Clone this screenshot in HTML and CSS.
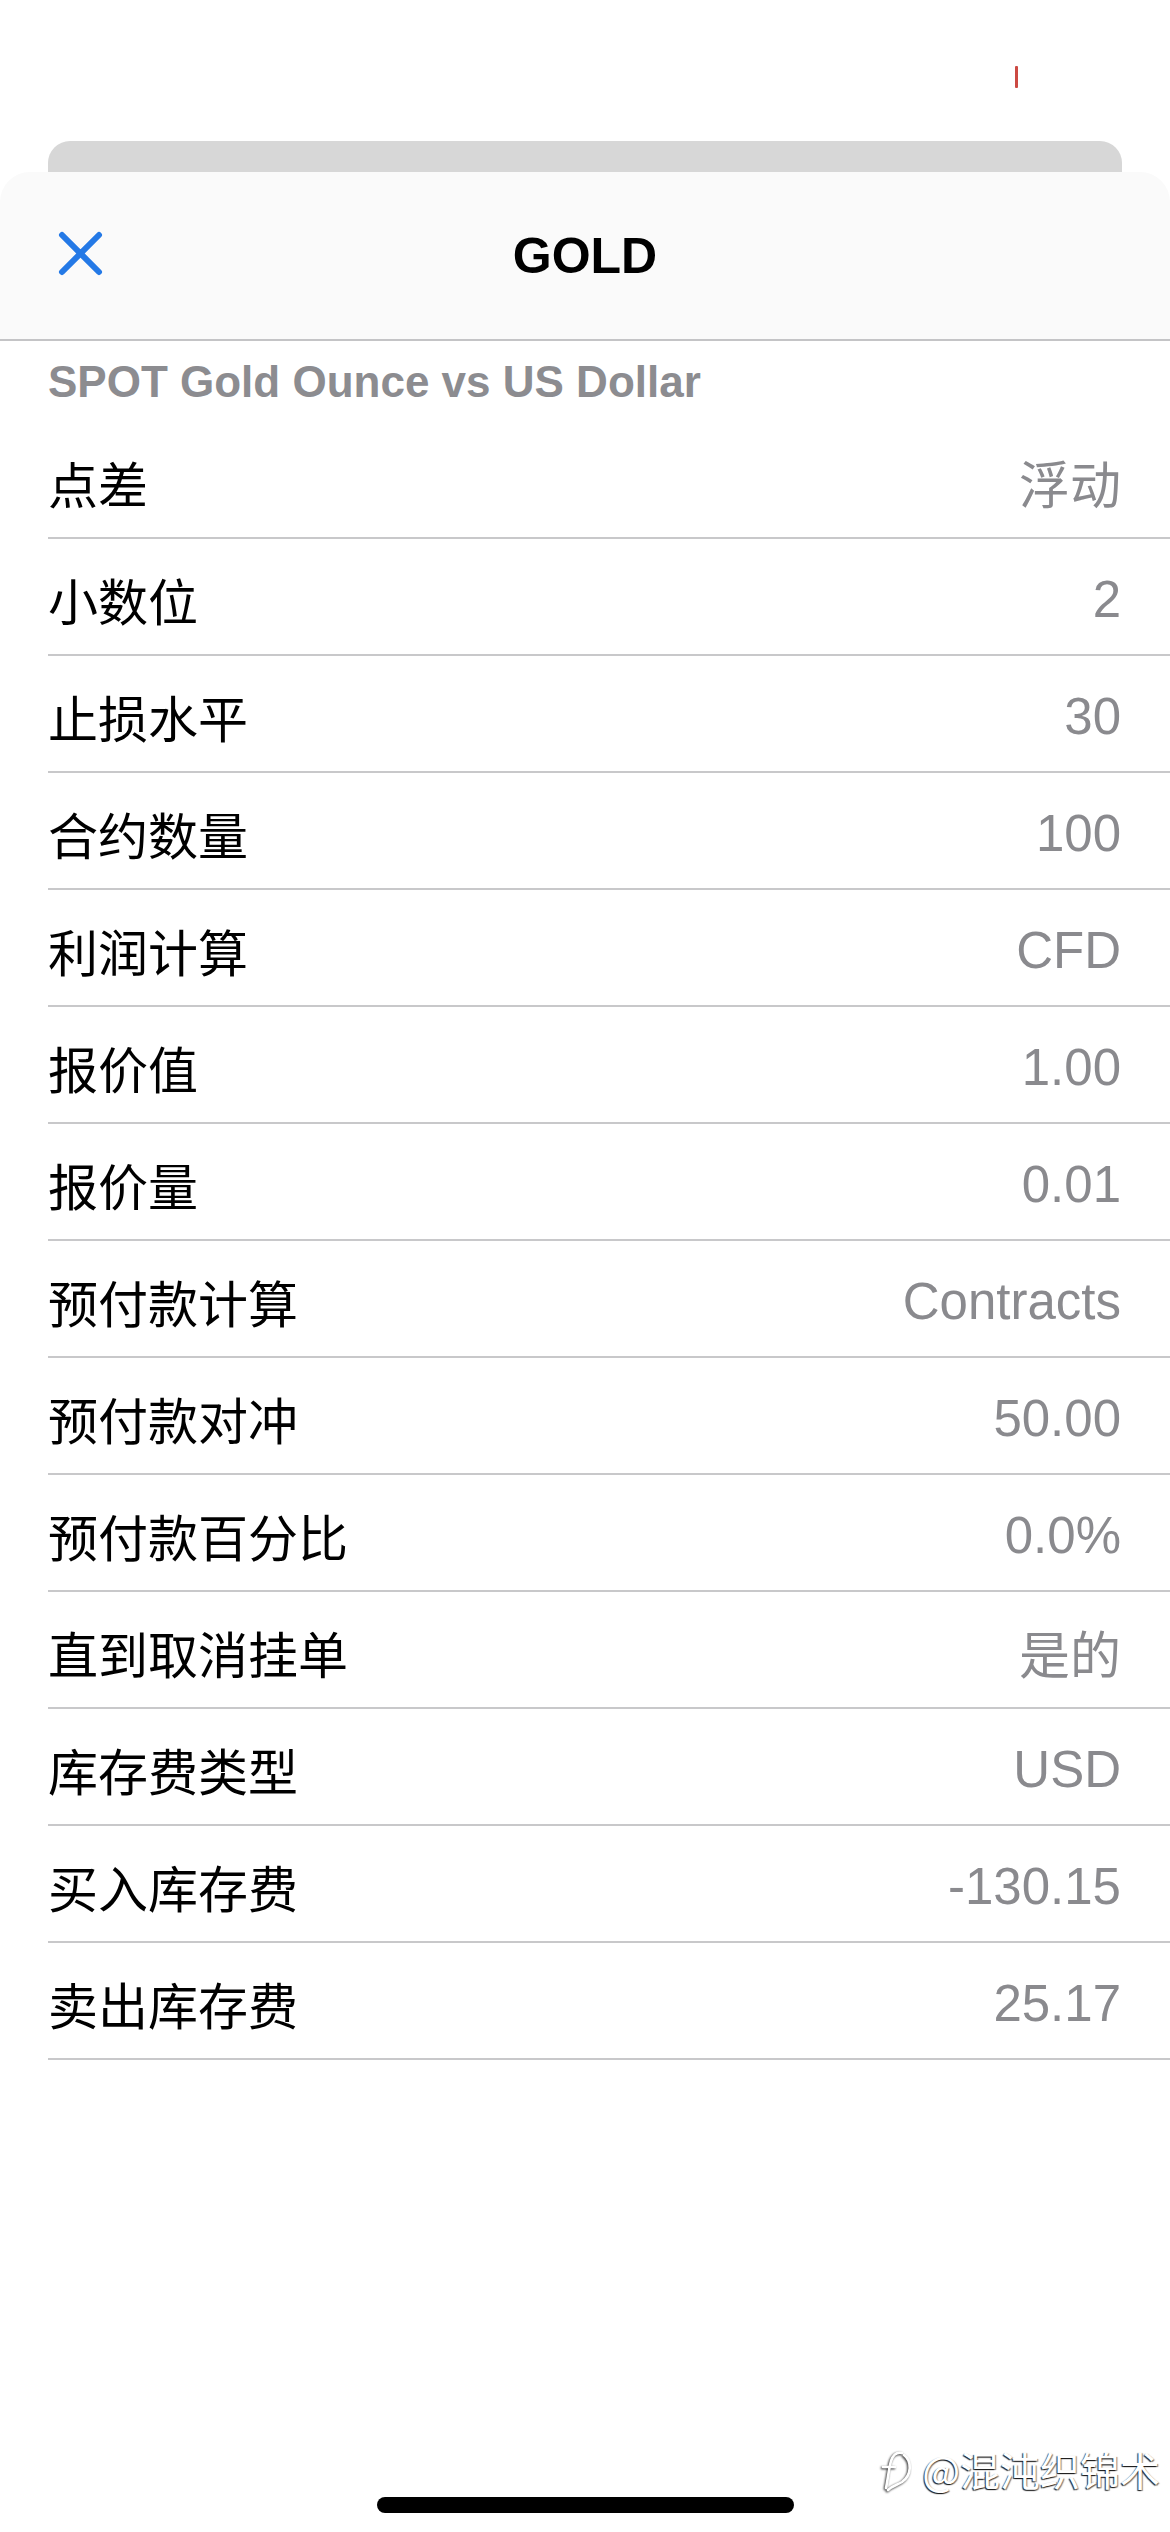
FILE: index.html
```html
<!DOCTYPE html>
<html lang="zh">
<head>
<meta charset="utf-8">
<title>GOLD</title>
<link rel="stylesheet" href="styles.css">
</head>
<body>
<div class="top"><span class="mark"></span></div>
<div class="back"></div>
<div class="sheet">
  <header class="nav">
    <svg class="close" viewBox="0 0 45 45" aria-label="关闭">
      <path d="M4 4 L41 41 M41 4 L4 41" stroke="#2479e6" stroke-width="6" stroke-linecap="round" fill="none"/>
    </svg>
    <div class="title">GOLD</div>
    <div></div>
  </header>
  <div class="subtitle">SPOT Gold Ounce vs US Dollar</div>
  <ul class="rows">
    <li class="row"><span class="label">点差</span><span class="value">浮动</span></li>
    <li class="row"><span class="label">小数位</span><span class="value">2</span></li>
    <li class="row"><span class="label">止损水平</span><span class="value">30</span></li>
    <li class="row"><span class="label">合约数量</span><span class="value">100</span></li>
    <li class="row"><span class="label">利润计算</span><span class="value">CFD</span></li>
    <li class="row"><span class="label">报价值</span><span class="value">1.00</span></li>
    <li class="row"><span class="label">报价量</span><span class="value">0.01</span></li>
    <li class="row"><span class="label">预付款计算</span><span class="value">Contracts</span></li>
    <li class="row"><span class="label">预付款对冲</span><span class="value">50.00</span></li>
    <li class="row"><span class="label">预付款百分比</span><span class="value">0.0%</span></li>
    <li class="row"><span class="label">直到取消挂单</span><span class="value">是的</span></li>
    <li class="row"><span class="label">库存费类型</span><span class="value">USD</span></li>
    <li class="row"><span class="label">买入库存费</span><span class="value">-130.15</span></li>
    <li class="row"><span class="label">卖出库存费</span><span class="value">25.17</span></li>
  </ul>
</div>
<div class="watermark">
  <svg class="wm-logo" viewBox="0 0 40 46">
    <path d="M9 42 C11 32 12 22 14 15 C16 9 20 6 25 7 M6 21 L18 21 M27 9 C35 15 35 29 25 36 C20 39 15 40 11 44" stroke="#fff" stroke-width="2.6" fill="none" stroke-linecap="round"/>
  </svg>
  <span>@混沌织锦术</span>
</div>
<div class="home"></div>
</body>
</html>
```
FILE: styles.css
```css
html, body {
  margin: 0;
  padding: 0;
}
body {
  width: 1170px;
  height: 2532px;
  overflow: hidden;
  position: relative;
  background: #ffffff;
  font-family: "Liberation Sans", "Noto Sans CJK SC", sans-serif;
}
.top {
  height: 141px;
  display: flex;
  justify-content: flex-end;
  align-items: flex-start;
  padding-right: 152px;
  box-sizing: border-box;
}
.mark {
  width: 3px;
  height: 22px;
  margin-top: 66px;
  background: #cc4a43;
  border-radius: 1px;
}
.back {
  height: 31px;
  margin: 0 48px;
  background: #d7d7d7;
  border-radius: 22px 22px 0 0;
}
.sheet {
  background: #ffffff;
  border-radius: 30px 30px 0 0;
  overflow: hidden;
}
.nav {
  height: 167px;
  background: #fafafa;
  border-bottom: 2px solid #c4c4c6;
  display: grid;
  grid-template-columns: 1fr auto 1fr;
  align-items: center;
}
.close {
  width: 45px;
  height: 45px;
  margin-left: 58px;
  margin-top: -4px;
}
.title {
  font-family: "Liberation Sans", sans-serif;
  font-weight: bold;
  font-size: 50px;
  color: #000000;
}
.subtitle {
  height: 81px;
  display: flex;
  align-items: center;
  padding-left: 48px;
  font-family: "Liberation Sans", sans-serif;
  font-weight: bold;
  font-size: 44px;
  color: #8c8c90;
}
.rows {
  list-style: none;
  margin: 0;
  padding: 0;
}
.row {
  height: 110px;
  padding-top: 5px;
  margin-left: 48px;
  padding-right: 49px;
  border-bottom: 2px solid #c8c8ca;
  display: flex;
  justify-content: space-between;
  align-items: center;
}
.label {
  font-family: "Noto Sans CJK SC", sans-serif;
  font-size: 50px;
  color: #000000;
}
.value {
  font-family: "Liberation Sans", "Noto Sans CJK SC", sans-serif;
  font-size: 51px;
  color: #8a8a8e;
}
.watermark {
  position: absolute;
  right: 10px;
  top: 2440px;
  display: flex;
  align-items: center;
  gap: 5px;
  font-family: "Noto Sans CJK SC", sans-serif;
  font-size: 40px;
  color: #ffffff;
  text-shadow: -1px 1px 1px rgba(0,0,0,0.85), 1px 1px 1px rgba(0,0,0,0.5);
}
.wm-logo {
  width: 40px;
  height: 46px;
  filter: drop-shadow(-1px 1px 0.8px rgba(0,0,0,0.85));
}
.home {
  position: absolute;
  left: 377px;
  top: 2497px;
  width: 417px;
  height: 16px;
  border-radius: 8px;
  background: #000000;
}
```
